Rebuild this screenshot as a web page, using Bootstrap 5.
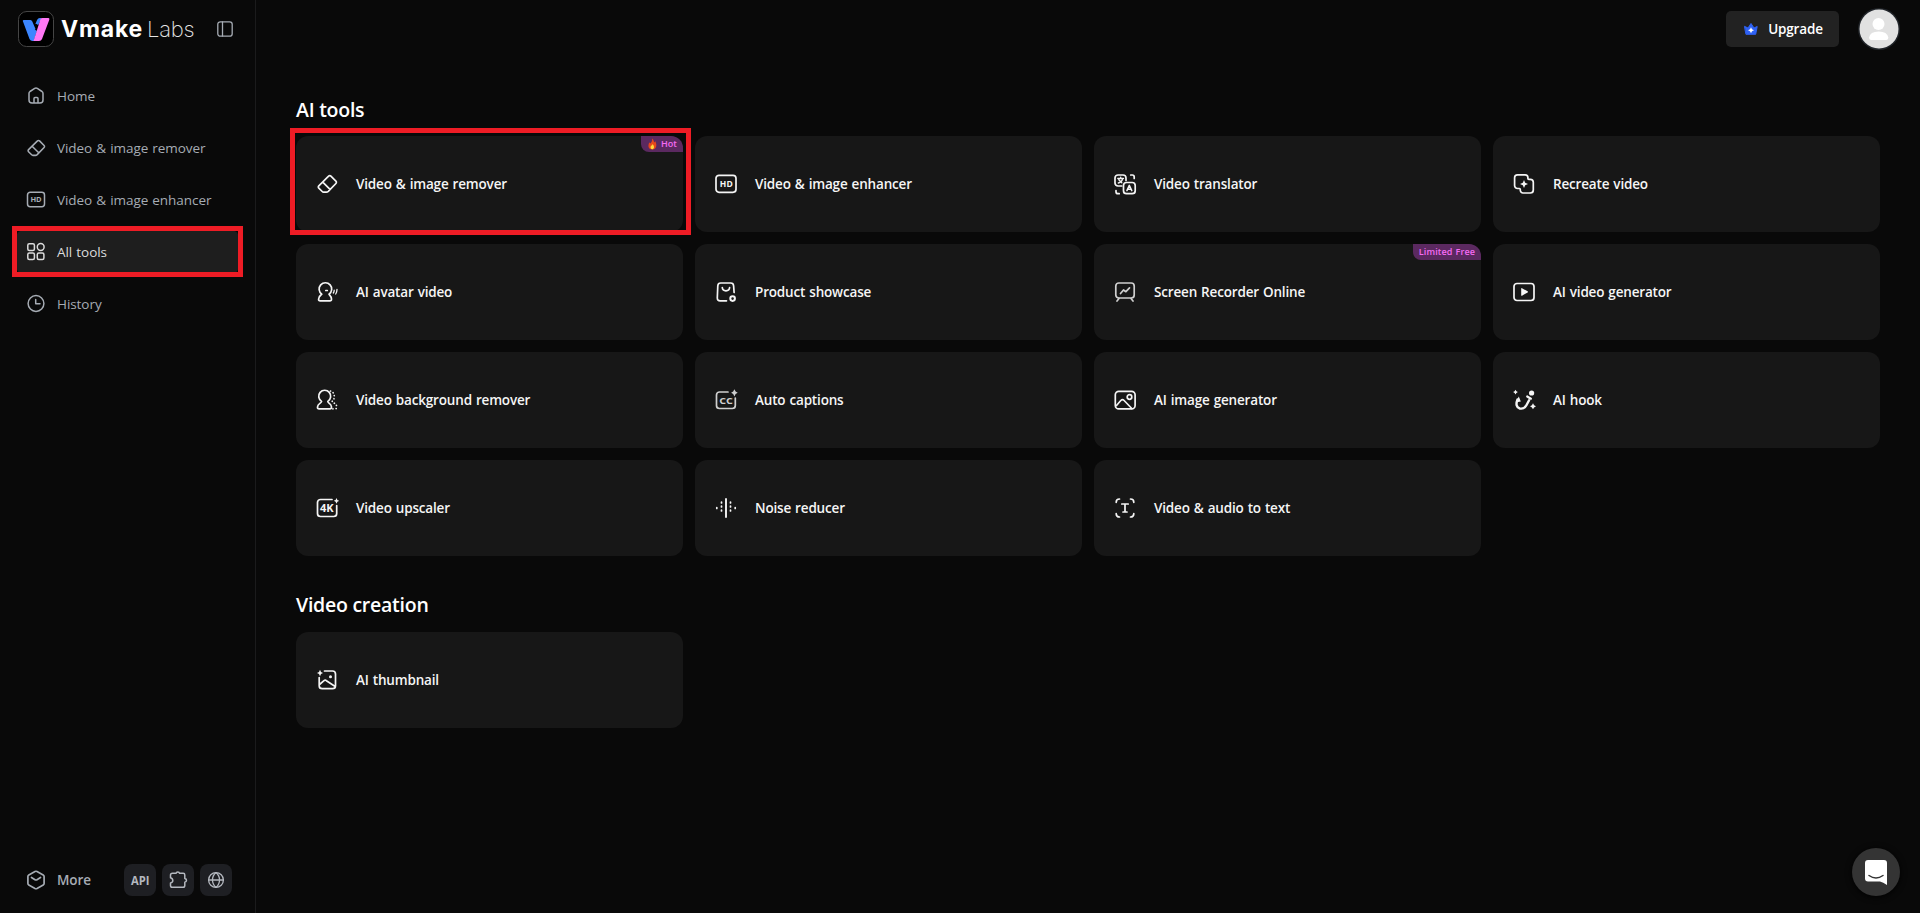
<!DOCTYPE html>
<html lang="en" data-bs-theme="dark">
<head>
<meta charset="utf-8">
<meta name="viewport" content="width=device-width, initial-scale=1">
<title>Vmake Labs</title>
<link href="https://cdn.jsdelivr.net/npm/bootstrap@5.3.0/dist/css/bootstrap.min.css" rel="stylesheet">
<style>
body{background:#090909;font-family:"Open Sans","Noto Sans",sans-serif;font-size:13.5px;color:#f5f5f5;overflow:hidden}
svg{display:block;flex:none;fill:none;stroke:currentColor;stroke-width:1.7;stroke-linecap:round;stroke-linejoin:round}
svg.thin{stroke-width:1.3}
svg.line{stroke-width:1.5}
svg.flat{stroke:none}
svg text{fill:currentColor;stroke:none;font-family:"Open Sans",sans-serif;font-weight:700}
.solid{fill:currentColor;stroke:none}
.side{width:256px;border-right:1px solid #1b1b1c;color:#a6acb4}
.brand{height:58px;padding:0 22px 0 18px}
.wordmark{color:#fff;font-family:"Inter","Open Sans",sans-serif;font-size:22px;line-height:36px;margin-left:7px;white-space:nowrap}
.wordmark b{font-weight:700;font-size:23px;letter-spacing:.8px}
.wordmark span{font-weight:200;margin-left:4px;letter-spacing:-.3px;color:#e4e4e4}
.side-nav{padding:16px 16px 0;gap:8px}
.side-nav .nav-link{height:44px;padding:0 0 0 10px;gap:11px;color:#a6acb4;border-radius:8px;letter-spacing:-.06px;word-spacing:.7px}
.side-nav .nav-link.active{background:#1e1e1e;color:#dcdcdc}
.outline{position:absolute;border:5px solid #ee1c25;pointer-events:none;z-index:3}
.side-nav .outline{inset:-4px -4px -3px}
.tile .outline{inset:-8px -8px -3px -6px}
.side-foot{padding:0 23px 17px 26px}
.more-label{margin-left:11px;letter-spacing:-.1px}
.mini{width:32px;height:32px;background:#1e1f23;border-radius:8px;color:#b4b8bf}
.top-bar{height:58px;padding:0 20px;gap:19px}
.upgrade{width:113px;height:36px;background:#222;border-radius:5px;color:#fff;font-size:13.5px;font-weight:600;padding:0 0 0 2px;gap:10px;letter-spacing:-.15px}
.avatar{width:42px;height:42px}
.content-area{padding:39px 40px 0}
.section-title{font-size:19.500px;font-weight:600;line-height:26px;margin:0 0 13px;letter-spacing:-.25px}
.section-gap{margin:36px 0 14px}
.tiles{display:grid;grid-template-columns:repeat(4,387px);gap:12px}
.tile{position:relative;height:96px;background:#171717;border-radius:12px;padding-left:19px;gap:17px;font-weight:600;letter-spacing:-.17px;word-spacing:.7px}
.tag{position:absolute;top:0;right:0;height:16px;line-height:16px;background:#5b2960;color:#f56bf3;border-radius:0 12px 0 8px;font-size:9px;font-weight:600;padding:0 6px;letter-spacing:.1px}
.tag svg{margin-right:3px}
.chat{position:fixed;right:20px;bottom:17px;width:48px;height:48px;background:#343434;box-shadow:0 1px 6px #000}
</style>
</head>
<body>
<div class="d-flex vh-100">
  <aside class="side d-flex flex-column flex-shrink-0">
    <div class="brand d-flex align-items-center">
      <svg width="36" height="36" viewBox="0 0 36 36"><rect x=".5" y=".5" width="35" height="35" rx="8" fill="#000" stroke="#454545" stroke-width="1"/><g stroke="none"><path fill="#3c86ff" d="M6 9h6.500q1.200.2 1.800 1.500L17.500 18l-3 3L17.500 23 16 30h-1.500q-2 0-3-2L4.800 10Q4.500 9 6 9z"/><path fill="#3c86ff" d="M17.200 13.200l2-4.500q.8-1.700 2.600-1.700h1.800l-3 6.200q-.4 1-1.600 0t-1.800 0z"/><path fill="#3c86ff" d="m13 16 6 4-4 10-4-6z"/><path fill="#ff78f5" d="M22.500 8q.5-1 2-1h6q1.300.2.8 1.700L24 28q-.7 2-3 2h-5.500z"/></g></svg>
      <div class="wordmark"><b>Vmake</b><span>Labs</span></div>
      <svg class="thin ms-auto" width="16" height="16" viewBox="0 0 16 16"><rect x=".8" y=".8" width="14.400" height="14.400" rx="2.500"/><path d="M5.500 1v14"/></svg>
    </div>
    <nav class="side-nav nav flex-column">
      <a class="nav-link d-flex align-items-center" href="#"><svg class="line" width="20" height="20" viewBox="0 0 20 20"><path d="M8.700 2.400 4 5.500Q3 6.200 3 7.400V14a3 3 0 0 0 3 3h8a3 3 0 0 0 3-3V7.400q0-1.200-1-1.900l-4.700-3.100q-1.300-.8-2.600 0zM8 17v-4.500q0-1 1-1h2q1 0 1 1V17"/></svg>Home</a>
      <a class="nav-link d-flex align-items-center" href="#"><svg width="20" height="20" viewBox="1 1 22 22"><path d="M13.600 4.200a1.600 1.600 0 0 1 2.300 0l5 5a1.600 1.600 0 0 1 0 2.300l-7.600 7.800a3 3 0 0 1-2 .8H8.600a2 2 0 0 1-1.400-.6l-3.400-3.400a1.600 1.600 0 0 1 0-2.300zM8 10.300l7 7"/></svg>Video &amp; image remover</a>
      <a class="nav-link d-flex align-items-center" href="#"><svg class="line" width="20" height="20" viewBox="0 0 20 20"><rect x="1.500" y="2.200" width="17" height="14.600" rx="2.700"/><text x="4.400" y="12.200" font-size="7.500" textLength="11">HD</text></svg>Video &amp; image enhancer</a>
      <a class="nav-link active d-flex align-items-center position-relative" href="#"><svg class="line" width="20" height="20" viewBox="0 0 20 20"><rect x="1.800" y="1.800" width="6.600" height="6.600" rx="1.500"/><circle cx="14.700" cy="5" r="3.400"/><rect x="1.800" y="10.900" width="6.600" height="6.600" rx="1.500"/><rect x="11.300" y="10.900" width="6.600" height="6.600" rx="1.500"/></svg>All tools<span class="outline"></span></a>
      <a class="nav-link d-flex align-items-center" href="#"><svg class="line" width="20" height="20" viewBox="0 0 20 20"><circle cx="10" cy="9.500" r="7.900"/><path d="M9.700 5.500v4.200h4.300"/></svg>History</a>
    </nav>
    <div class="side-foot mt-auto d-flex align-items-center">
      <svg width="20" height="20" viewBox="0 0 20 20"><path d="M9 1.500q1-.5 2 0l6.200 3.400q.9.500.9 1.500v7.200q0 1-.9 1.500L11 18.500q-1 .5-2 0l-6.200-3.400q-.9-.5-.9-1.500V6.400q0-1 .9-1.500zM5.500 7.500 9 9.700q1 .6 2 0l3.500-2.200"/></svg>
      <span class="more-label fw-semibold">More</span>
      <div class="d-flex ms-auto" style="gap:6px">
        <div class="mini d-flex align-items-center justify-content-center"><svg width="20" height="16" viewBox="0 0 20 16"><text x="1" y="12.700" font-size="12" textLength="18.500" lengthAdjust="spacingAndGlyphs">API</text></svg></div>
        <div class="mini d-flex align-items-center justify-content-center"><svg class="line" width="20" height="20" viewBox="0 0 20 20"><path d="M4.500 3.300h3.500q.3-1.300 1.800-1.300t1.800 1.300h3.600q1.600 0 1.600 1.600v3.500q1.700.3 1.700 1.900t-1.700 1.900v3.300q0 1.800-1.800 1.800H4.300q-1.800 0-1.800-1.800v-2.600q2.300-.5 2.300-2.500T2.500 7.800V5.100q0-1.800 2-1.800z"/></svg></div>
        <div class="mini d-flex align-items-center justify-content-center"><svg class="thin" width="18" height="18" viewBox="0 0 18 18"><circle cx="9" cy="9" r="7.400"/><path d="M1.600 9h14.800M9 1.600c-4.700 4-4.700 10.800 0 14.800M9 1.600c4.700 4 4.700 10.800 0 14.800"/></svg></div>
      </div>
    </div>
  </aside>
  <main class="flex-grow-1">
    <header class="top-bar d-flex align-items-center justify-content-end">
      <button class="upgrade btn d-flex align-items-center justify-content-center"><svg width="14" height="14" viewBox="0 0 14 14"><path fill="#2f62f5" stroke="#2f62f5" stroke-width="1" d="M.8 4.500 4 6l3-4.500L10 6l3.200-1.500-1.500 7.800H2.300z"/><path fill="#fff" stroke="none" d="M7 5.300 8 7.300l2 1-2 1-1 2-1-2-2-1 2-1z"/></svg>Upgrade</button>
      <div class="avatar"><svg class="flat" width="42" height="42" viewBox="0 0 42 42"><circle cx="21" cy="21" r="21" fill="#202429"/><circle cx="21" cy="21" r="19.500" fill="#e1e1e1"/><circle cx="20.500" cy="16" r="6" fill="#fff"/><path fill="#fff" d="M13 32q-2-.2-1.900-2.500Q12 23.500 20.700 23.500T30.300 29.500Q30.400 31.800 28.500 32z"/></svg></div>
    </header>
    <div class="content-area">
      <h2 class="section-title">AI tools</h2>
      <section class="tiles">
        <div class="tile d-flex align-items-center"><svg width="24" height="24" viewBox="0 0 24 24"><path d="M13.600 4.200a1.600 1.600 0 0 1 2.300 0l5 5a1.600 1.600 0 0 1 0 2.300l-7.600 7.800a3 3 0 0 1-2 .8H8.600a2 2 0 0 1-1.400-.6l-3.400-3.400a1.600 1.600 0 0 1 0-2.300zM8 10.300l7 7"/></svg>Video &amp; image remover
          <span class="tag d-flex align-items-center"><svg class="flat" width="11" height="12" viewBox="0 0 11 12"><path fill="#e8461b" d="M5 .5C7 2 6.500 3.500 7.500 4.500 8 4 8 3.500 8 3c2 2.500 2.200 8.500-2.500 8.500S.8 7 2.500 4.200c.2.800.5 1 .8 1.300C4.500 4 5.500 3 5 .5z"/><path fill="#ffd83a" d="M5.500 6c1.500 1.500 2.500 4.500 0 5.200C3 11 3.300 8.500 4.300 7.500c.4.300.8 0 1.200-1.500z"/></svg>Hot</span><span class="outline"></span></div>
        <div class="tile d-flex align-items-center"><svg width="24" height="24" viewBox="0 0 24 24"><rect x="2" y="3.300" width="20" height="17" rx="3"/><text x="5.700" y="15" font-size="8.500" textLength="13">HD</text></svg>Video &amp; image enhancer</div>
        <div class="tile d-flex align-items-center"><svg width="24" height="24" viewBox="0 0 24 24"><path d="M8.700 14H5a3 3 0 0 1-3-3V6a3 3 0 0 1 3-3h5a3 3 0 0 1 3 3v2.500"/><path stroke-width="1.300" d="M4.800 6.500h5.700M7.700 5.200v1.300M9.600 6.600c-.3 2-2 3.800-4.300 4.400M5.800 7.800l3 3"/><rect x="10.500" y="10.500" width="11.700" height="11.200" rx="3"/><path stroke-width="1.500" d="m13.900 18.600 2.400-5.200 2.500 5.200M14.700 17.200h3.300"/><path d="M17.700 3h1.600q1.900 0 1.900 1.900v1.500M3 18.500v1.200q0 2 1.900 2h1.300"/></svg>Video translator</div>
        <div class="tile d-flex align-items-center"><svg width="24" height="24" viewBox="0 0 24 24"><path d="M5.500 2.900h7.700a2.700 2.700 0 0 1 2.700 2.700v.8q0 .9.900.9h1.500a3 3 0 0 1 3 3v7.700a3 3 0 0 1-3 3H11a2.700 2.700 0 0 1-2.700-2.700v-.9q0-.9-.9-.9H5.500a2.900 2.900 0 0 1-2.900-2.900V5.800a2.900 2.900 0 0 1 2.900-2.900z"/><path class="solid" d="m12 8 1.200 2.800L16 12l-2.800 1.200L12 16l-1.200-2.800L8 12l2.800-1.200z"/></svg>Recreate video</div>
        <div class="tile d-flex align-items-center"><svg width="24" height="24" viewBox="0 0 24 24"><path d="M6.800 14.200a6.300 6.300 0 1 1 7.200 0c.5 1 2.200 1.600 2.500 4.800q.1 1.800-1.700 1.800H5.200q-1.800 0-1.600-1.800c.3-3.200 2-3.800 3.200-4.800zM10.800 10.500h1.500"/><path stroke-width="1.300" d="M19.200 10.200q0 1.600-.9 2.800M22 9.500q0 2.500-1.300 4.500"/></svg>AI avatar video</div>
        <div class="tile d-flex align-items-center"><svg width="24" height="24" viewBox="0 0 24 24"><path d="M12.500 20.800H6.200q-3 0-2.900-3L3.800 5.700q.2-2.700 2.900-2.700h10q2.700 0 2.900 2.700l.5 6.800M8.300 7.500c.2 4.400 7.100 4.400 7.300 0"/><circle cx="18.600" cy="18.600" r="2.300" stroke-width="2"/></svg>Product showcase</div>
        <div class="tile d-flex align-items-center"><svg width="24" height="24" viewBox="0 0 24 24" color="#cfcfcf"><rect x="2.800" y="3" width="18.400" height="15" rx="3"/><path d="m7.500 13.500 3-3.500 2.400 1.700L16.500 7.800M6 18.500l-2 2.600M18 18.500l2 2.600"/></svg>Screen Recorder Online<span class="tag">Limited Free</span></div>
        <div class="tile d-flex align-items-center"><svg width="24" height="24" viewBox="0 0 24 24"><rect x="2" y="3.500" width="20" height="17" rx="3"/><path class="solid" d="M9.200 8.700q0-.9.800-.5l5.600 3.100q.8.600 0 1.100L10 15.700q-.8.400-.8-.5z"/></svg>AI video generator</div>
        <div class="tile d-flex align-items-center"><svg width="24" height="24" viewBox="0 0 24 24"><path d="M6.600 13.400a6 6 0 1 1 6.200 0c.2 2.300 3.400 1.800 3.700 5.600q.1 1.800-1.600 1.800H4.100q-1.800 0-1.600-1.800c.3-3.800 3.500-3.300 4.100-5.600z"/><path stroke-dasharray=".1 3" d="M15.500 3c4.500 1.200 5 8 1.600 10.400 1 2 4.400 1.600 4.700 5.600q.1 1.800-1.600 1.800h-3"/></svg>Video background remover</div>
        <div class="tile d-flex align-items-center"><svg width="24" height="24" viewBox="0 0 24 24" color="#cfcfcf"><path d="M14 4H5.500a3 3 0 0 0-3 3v10.500a3 3 0 0 0 3 3h12.800a3 3 0 0 0 3-3V10"/><text x="5.300" y="15.700" font-size="9" textLength="13.300" lengthAdjust="spacingAndGlyphs">CC</text><path class="solid" d="m20.400 1.200 1.200 2.400 2.100 1.200-2.100 1.200-1.200 2.400L19.200 6l-2.100-1.200 2.100-1.200z"/></svg>Auto captions</div>
        <div class="tile d-flex align-items-center"><svg width="24" height="24" viewBox="0 0 24 24"><rect x="2.300" y="3.300" width="19.800" height="17.600" rx="3.500"/><path d="m3.500 17.500 4.300-5q1.700-1.600 3.300 0l7.700 8"/><circle cx="16.500" cy="9" r="2.300"/></svg>AI image generator</div>
        <div class="tile d-flex align-items-center"><svg width="24" height="24" viewBox="0 0 24 24"><path stroke-width="2.400" d="M5.500 11.500c-1.900 4.500-1 8.200 2.300 9 3.600.7 5.200-.7 6.600-3.300l2.700-5"/><path class="solid" d="m6.800 8.500 2 5-5.300 1z"/><circle class="solid" cx="19.600" cy="5" r="2.600"/><path stroke-width="2.200" d="m15.200 8.500 3.700 2.200"/><path class="solid" d="m3.500 1.700.9 1.500 1.500.9-1.500.9-.9 1.500L2.600 5l-1.500-.9 1.500-.9zM21 15.300l1.100 1.900 1.900 1.100-1.900 1.100-1.100 1.900-1.100-1.900-1.900-1.100 1.900-1.100z"/></svg>AI hook</div>
        <div class="tile d-flex align-items-center"><svg width="24" height="24" viewBox="0 0 24 24"><path d="M17 3.500H5.500a3 3 0 0 0-3 3v11a3 3 0 0 0 3 3h13.200a3 3 0 0 0 3-3V9.500"/><text x="5" y="15.700" font-size="10" textLength="13.300" lengthAdjust="spacingAndGlyphs">4K</text><path class="solid" d="m21.500 2 .9 2 1.800.8-1.800.9-.9 2-.9-2-1.800-.9 1.800-.8z"/></svg>Video upscaler</div>
        <div class="tile d-flex align-items-center"><svg width="24" height="24" viewBox="0 0 24 24"><path stroke-width="1.900" d="M12 3v18"/><path stroke-dasharray="1 3" d="M7.500 6v12M16.500 6v12M2.800 11.500v1M21.200 11.500v1"/></svg>Noise reducer</div>
        <div class="tile d-flex align-items-center"><svg width="24" height="24" viewBox="0 0 24 24"><path d="M6.500 3q-3.300 0-3.300 3.300M17.500 3q3.300 0 3.300 3.300M3.200 17.700Q3.200 21 6.500 21M20.800 17.700q0 3.300-3.300 3.300M8.800 8h6.400M12 8v8M10 16h4"/></svg>Video &amp; audio to text</div>
      </section>
      <h2 class="section-title section-gap">Video creation</h2>
      <section class="tiles">
        <div class="tile d-flex align-items-center"><svg width="24" height="24" viewBox="0 0 24 24"><path d="M9.500 3h8a3 3 0 0 1 3 3v11.700a3 3 0 0 1-3 3H7.200a3 3 0 0 1-3-3V9.500M4.500 16.500l4.500-3.800q1.200-1 2.400 0l8.800 5.800"/><circle class="solid" cx="15.500" cy="8.800" r="1.500"/><path class="solid" d="m5 1.800 1 2.200 2 1-2 1-1 2.200L4 6 2 5l2-1z"/></svg>AI thumbnail</div>
      </section>
    </div>
  </main>
</div>
<button class="chat btn rounded-circle border-0 p-0 d-flex align-items-center justify-content-center" aria-label="Chat"><svg width="22" height="25" viewBox="0 0 22 25"><path fill="#fff" stroke="none" d="M3 0h16q3 0 3 3v22q-4-2.600-7-3.500H3q-3 0-3-3V3q0-3 3-3z"/><path stroke="#343434" stroke-width="1.500" d="M4 15.500q7 5 14 0"/></svg></button>
<script src="https://cdn.jsdelivr.net/npm/bootstrap@5.3.0/dist/js/bootstrap.bundle.min.js"></script>
</body>
</html>
